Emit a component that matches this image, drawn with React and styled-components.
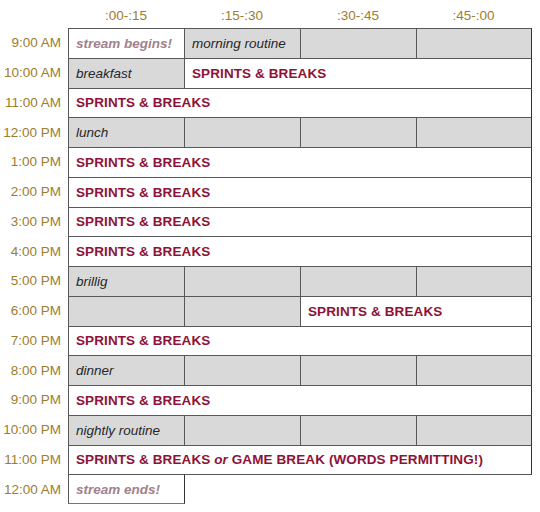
import React from "react";
import styled, { createGlobalStyle } from "styled-components";

const Global = createGlobalStyle`
  html, body { margin: 0; padding: 0; background: #ffffff; }
  body { font-family: "Liberation Sans", Arial, sans-serif; }
`;

const GOLD = "#9c7d2e";
const RED = "#8e1237";
const MAUVE = "#a1818b";
const LINE = "#585858";

const Schedule = styled.div`
  display: grid;
  grid-template-columns: 68px repeat(3, 116px) 115px;
  grid-template-rows: 28px repeat(16, 29.75px);
  width: 540px;
  padding-bottom: 4px;
  font-size: 13.5px;
`;

const HeadCell = styled.div`
  display: flex;
  align-items: center;
  justify-content: center;
  color: ${GOLD};
  padding-top: 2px;
`;

const Corner = styled.div``;

const TimeLabel = styled.div`
  display: flex;
  align-items: center;
  justify-content: flex-end;
  padding-right: 7px;
  color: ${GOLD};
  white-space: nowrap;
`;

const Cell = styled.div`
  grid-column: span ${(p) => p.$span || 1};
  display: flex;
  align-items: center;
  padding-left: 7px;
  box-sizing: border-box;
  border: 1px solid ${LINE};
  border-right-color: ${(p) => (p.$edge ? "#333" : LINE)};
  border-bottom-color: ${(p) => (p.$last ? "#777" : LINE)};
  margin: 0 -1px ${(p) => (p.$last ? "0" : "-1px")} 0;
  background: ${(p) => (p.$grey ? "#d9d9d9" : "#ffffff")};
  white-space: nowrap;
  overflow: hidden;
`;

const Activity = styled.span`
  font-style: italic;
  color: #262626;
`;

const Sprint = styled.span`
  font-weight: bold;
  color: ${RED};
  letter-spacing: 0.1px;
`;

const Or = styled.em`
  font-style: italic;
`;

const Stream = styled.span`
  font-weight: bold;
  font-style: italic;
  color: ${MAUVE};
`;

const S = "SPRINTS & BREAKS";

const rows = [
  ["9:00 AM", [
    { kind: "stream", text: "stream begins!" },
    { kind: "act", text: "morning routine", grey: true },
    { grey: true },
    { grey: true },
  ]],
  ["10:00 AM", [
    { kind: "act", text: "breakfast", grey: true },
    { kind: "sprint", text: S, span: 3 },
  ]],
  ["11:00 AM", [{ kind: "sprint", text: S, span: 4 }]],
  ["12:00 PM", [
    { kind: "act", text: "lunch", grey: true },
    { grey: true }, { grey: true }, { grey: true },
  ]],
  ["1:00 PM", [{ kind: "sprint", text: S, span: 4 }]],
  ["2:00 PM", [{ kind: "sprint", text: S, span: 4 }]],
  ["3:00 PM", [{ kind: "sprint", text: S, span: 4 }]],
  ["4:00 PM", [{ kind: "sprint", text: S, span: 4 }]],
  ["5:00 PM", [
    { kind: "act", text: "brillig", grey: true },
    { grey: true }, { grey: true }, { grey: true },
  ]],
  ["6:00 PM", [
    { grey: true }, { grey: true },
    { kind: "sprint", text: S, span: 2 },
  ]],
  ["7:00 PM", [{ kind: "sprint", text: S, span: 4 }]],
  ["8:00 PM", [
    { kind: "act", text: "dinner", grey: true },
    { grey: true }, { grey: true }, { grey: true },
  ]],
  ["9:00 PM", [{ kind: "sprint", text: S, span: 4 }]],
  ["10:00 PM", [
    { kind: "act", text: "nightly routine", grey: true },
    { grey: true }, { grey: true }, { grey: true },
  ]],
  ["11:00 PM", [{ kind: "game", span: 4 }]],
  ["12:00 AM", [{ kind: "stream", text: "stream ends!", last: true }]],
];

function Content({ c }) {
  if (c.kind === "stream") return <Stream>{c.text}</Stream>;
  if (c.kind === "act") return <Activity>{c.text}</Activity>;
  if (c.kind === "sprint") return <Sprint>{c.text}</Sprint>;
  if (c.kind === "game")
    return (
      <Sprint>
        SPRINTS &amp; BREAKS <Or>or</Or> GAME BREAK (WORDS PERMITTING!)
      </Sprint>
    );
  return null;
}

export default function App() {
  return (
    <>
      <Global />
      <Schedule>
        <Corner />
        {[":00-:15", ":15-:30", ":30-:45", ":45-:00"].map((h) => (
          <HeadCell key={h}>{h}</HeadCell>
        ))}
        {rows.map(([time, cells]) => {
          let col = 0;
          return (
            <React.Fragment key={time}>
              <TimeLabel>{time}</TimeLabel>
              {cells.map((c, i) => {
                col += c.span || 1;
                return (
                  <Cell
                    key={i}
                    $span={c.span}
                    $grey={c.grey}
                    $edge={col === 4 || c.last}
                    $last={c.last}
                  >
                    <Content c={c} />
                  </Cell>
                );
              })}
            </React.Fragment>
          );
        })}
      </Schedule>
    </>
  );
}
